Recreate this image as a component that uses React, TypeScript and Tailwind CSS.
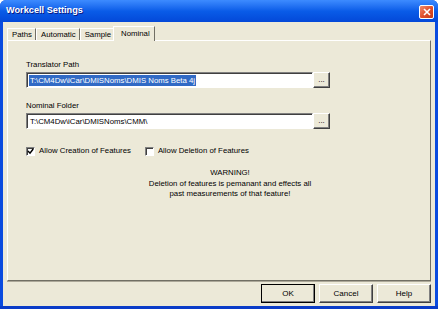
import React from "react";

const font = "font-['Liberation_Sans',Arial,sans-serif]";

function Tab({ label, active }: { label: string; active?: boolean }) {
  if (active) {
    return <div className="relative z-10 -ml-[2px] -mb-[1px] h-[15px] bg-[#ECE9D8] border-t border-l border-t-white border-l-white border-r border-r-[#716F64] pl-[7px] pr-[4px] pt-[2px] leading-[10px]">
        {label}
      </div>;
  }
  return <div className="h-[12px] border-t border-l border-t-white border-l-white border-r border-r-[#716F64] pl-[4px] pr-[3px] pt-[1px] leading-[10px]">
      {label}
    </div>;
}

function PathField({ value, selected }: { value: string; selected?: boolean }) {
  return <div className="flex h-[16px] mt-[2px]">
      <div className="w-[287px] h-[16px] bg-white border-t border-l border-t-[#808080] border-l-[#808080] border-b border-r border-b-white border-r-white shadow-[inset_1px_1px_#404040] pl-[2px] pt-[2px]">
        <span className={`inline-block h-[11px] leading-[11px] px-[1px] ${selected ? "bg-[#316AC5] text-white" : "text-black"}`}>
          {value}
        </span>
      </div>
      <button className="w-[17px] h-[16px] bg-[#ECE9D8] border-t border-l border-t-white border-l-white border-b border-r border-b-[#404040] border-r-[#404040] shadow-[inset_-1px_-1px_#808080] text-[8px] leading-[8px] flex items-end justify-center pb-[3px]">
        ...
      </button>
    </div>;
}

function Check({ label, checked }: { label: string; checked?: boolean }) {
  return <div className="flex items-center gap-[4px]">
      <div className="w-[9px] h-[9px] bg-white border-t border-l border-t-[#808080] border-l-[#808080] border-b border-r border-b-white border-r-white shadow-[inset_1px_1px_#404040] flex items-center justify-center">
        {checked && <svg width="7" height="7" viewBox="0 0 7 7">
            <path d="M1 3 L3 5.2 L6.2 1" stroke="#000" strokeWidth="1.5" fill="none" />
          </svg>}
      </div>
      <span className="leading-[10px]">{label}</span>
    </div>;
}

function DlgButton({ label, isDefault }: { label: string; isDefault?: boolean }) {
  return <button className={`w-[54px] h-[19px] bg-[#ECE9D8] text-[8px] leading-[10px] text-black border-t border-l border-b border-r border-t-white border-l-white border-b-[#404040] border-r-[#404040] shadow-[inset_-1px_-1px_#808080] ${isDefault ? "outline outline-1 outline-black -outline-offset-1" : ""}`}>
      {label}
    </button>;
}

export default function App() {
  return <div className={`w-[438px] h-[309px] flex flex-col bg-[#0A4BDF] rounded-t-[6px] overflow-hidden ${font} text-[7.8px] text-black`}>
      <div className="h-[22px] flex items-center justify-between pl-[6px] pr-[4px] bg-gradient-to-b from-[#3D8BFF] via-[#0A5CE8] to-[#0448D8]">
        <span className="text-white font-bold text-[9.2px] [text-shadow:1px_1px_#0A1883]">Workcell Settings</span>
        <div className="w-[15px] h-[14px] mt-[1px] rounded-[2px] border border-white bg-gradient-to-br from-[#F08A6A] via-[#E0502C] to-[#C33A17] flex items-center justify-center">
          <svg width="8" height="8" viewBox="0 0 8 8">
            <path d="M1 1 L7 7 M7 1 L1 7" stroke="#fff" strokeWidth="1.6" />
          </svg>
        </div>
      </div>
      <div className="flex-1 mx-[3px] bg-[#ECE9D8] flex flex-col px-[4px] pt-[4px]">
        <div className="flex items-end h-[14px]">
          <Tab label="Paths" />
          <Tab label="Automatic" />
          <Tab label="Sample" />
          <Tab label="Nominal" active />
        </div>
        <div className="h-[241px] border-t border-l border-t-white border-l-white border-r border-b border-r-[#716F64] border-b-[#716F64] shadow-[0_1px_#ACA899] flex flex-col pl-[18px] pt-[19px]">
          <div className="h-[10px] leading-[10px]">Translator Path</div>
          <PathField value="T:\CM4Dw\iCar\DMISNoms\DMIS Noms Beta 4j" selected />
          <div className="h-[10px] leading-[10px] mt-[13px]">Nominal Folder</div>
          <PathField value="T:\CM4Dw\iCar\DMISNoms\CMM\" />
          <div className="flex mt-[17px] gap-[14px]">
            <Check label="Allow Creation of Features" checked />
            <Check label="Allow Deletion of Features" />
          </div>
          <div className="mt-[12px] ml-[104px] w-[200px] text-center leading-[10.5px]">
            <div>WARNING!</div>
            <div>Deletion of features is pemanant and effects all</div>
            <div>past measurements of that feature!</div>
          </div>
        </div>
        <div className="flex justify-end gap-[4px] mt-[3px]">
          <DlgButton label="OK" isDefault />
          <DlgButton label="Cancel" />
          <DlgButton label="Help" />
        </div>
      </div>
      <div className="h-[3px] bg-[#0A3CC8]" />
    </div>;
}
